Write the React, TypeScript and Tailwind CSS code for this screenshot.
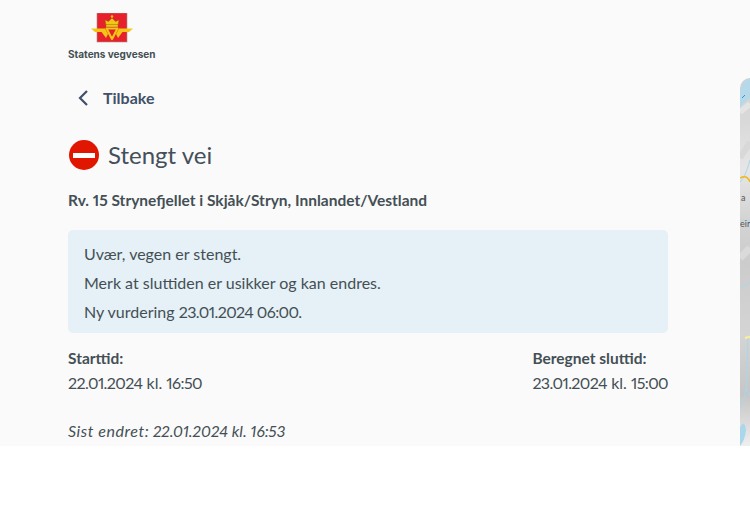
// Road closure detail page with a sliver of map on the right
function Logo() {
  return (
    <svg width="88" height="34" viewBox="0 0 88 34" className="block" aria-hidden="true">
      <rect x="29" y="0" width="30" height="29" fill="#e8202c" stroke="#9a8f88" strokeWidth="0.6" />
      {/* crown */}
      <path d="M38 12 L37 7 L40.500 8.500 L44 5 L47.500 8.500 L51 7 L50 12 Z" fill="#f3c516" stroke="#8a6a10" strokeWidth="0.5" />
      <rect x="38" y="11.500" width="12" height="2.500" fill="#f3c516" stroke="#8a6a10" strokeWidth="0.4" />
      <circle cx="44" cy="3.500" r="1.200" fill="#f3c516" />
      {/* wings */}
      <path d="M23 15.500 L37 15.500 L40 21 L38 25 L33.500 19 L27 19 Z" fill="#f3c516" />
      <path d="M65 15.500 L51 15.500 L48 21 L50 25 L54.500 19 L61 19 Z" fill="#f3c516" />
      {/* wheel triangle */}
      <path d="M38.500 15.500 L49.500 15.500 L44 26 Z" fill="#e8202c" stroke="#f3c516" strokeWidth="2.200" strokeLinejoin="round" />
    </svg>
  );
}

function MapStrip() {
  return (
    <svg viewBox="0 0 10 368" preserveAspectRatio="none" className="w-full h-full block" aria-hidden="true">
      <defs>
        <linearGradient id="relief" x1="0" y1="0" x2="0" y2="1">
          <stop offset="0" stopColor="#d2d2d2" />
          <stop offset="0.12" stopColor="#d9d9d9" />
          <stop offset="0.25" stopColor="#e6e6e6" />
          <stop offset="0.38" stopColor="#d4d4d4" />
          <stop offset="0.5" stopColor="#cccccc" />
          <stop offset="0.7" stopColor="#d4d4d4" />
          <stop offset="0.86" stopColor="#c6c6c6" />
          <stop offset="0.94" stopColor="#dcdcdc" />
          <stop offset="1" stopColor="#efefef" />
        </linearGradient>
      </defs>
      <rect width="10" height="368" fill="url(#relief)" />
      <path d="M0 30 L0 14 Q2 2 10 0 L10 20 Q4 24 0 30 Z" fill="#b5d9e9" />
      <path d="M2 20 L5 17" stroke="#3a8fe0" strokeWidth="1" fill="none" />
      <path d="M0 34 L10 26" stroke="#e4e4e4" strokeWidth="6" fill="none" />
      <path d="M0 80 L10 64" stroke="#d8d8d8" strokeWidth="6" fill="none" />
      <path d="M0 104 Q5 100 10 82" stroke="#a9d7ec" strokeWidth="1" fill="none" />
      <path d="M0 100 Q7 96 10 104" stroke="#f2b90f" strokeWidth="1.500" fill="none" />
      <path d="M0 142 L10 143" stroke="#a9d7ec" strokeWidth="1" fill="none" />
      <path d="M0 180 L10 170" stroke="#dadada" strokeWidth="7" fill="none" />
      <path d="M0 210 Q5 206 10 205" stroke="#a9d7ec" strokeWidth="1" fill="none" />
      <path d="M5 260 L10 259" stroke="#f5ef9a" strokeWidth="2.500" fill="none" />
      <path d="M8 260 L6 310 Q5 322 0 330" stroke="#a9d7ec" strokeWidth="1" fill="none" />
      <path d="M6 310 L10 318" stroke="#a9d7ec" strokeWidth="1" fill="none" />
      <path d="M0 368 L0 350 Q4 340 6 352 Q5 362 0 368 Z" fill="#a9d7ec" />
    </svg>
  );
}

// Lato's digits run wider than the reference face, so number runs get pulled in
function Num({ children }: { children: React.ReactNode }) {
  return <span className="tracking-[-0.6px]">{children}</span>;
}

export default function App() {
  return (
    <div className="h-[530px] bg-white font-['Lato',sans-serif] text-[16px] text-[#444f55] [font-variant-numeric:proportional-nums]">
      <div className="h-[446px] bg-[#fafafa] flex overflow-hidden">
        <main className="w-[740px] shrink-0 pl-[68px] pr-[72px]">
          <div className="pt-[13px] h-[64px]">
            <Logo />
            <p className="w-[88px] text-[10px] leading-[14px] font-bold whitespace-nowrap font-['Inter',sans-serif]">
              Statens vegvesen
            </p>
          </div>

          <div className="mt-[24px] flex items-center h-[20px] pl-[8px] gap-[13px] text-[#3f5068]">
            <svg width="14" height="18" viewBox="0 0 14 18" fill="none" stroke="#3f5068" strokeWidth="2.200" aria-hidden="true">
              <path d="M11 2 L4 9 L11 16" />
            </svg>
            <span className="font-bold text-[16px]">Tilbake</span>
          </div>

          <div className="mt-[31px] flex items-center gap-[9px] h-[32px] pl-[1px]">
            <span className="w-[30px] h-[30px] rounded-full bg-[#e01600] flex items-center justify-center shrink-0">
              <span className="w-[22px] h-[5px] bg-white" />
            </span>
            <h1 className="text-[24px] leading-[32px] text-[#444f5a]">Stengt vei</h1>
          </div>

          <p className="mt-[17px] leading-[24px] font-bold text-[15.500px]">
            Rv. 15 Strynefjellet i Skjåk/Stryn, Innlandet/Vestland
          </p>

          <div className="mt-[18px] h-[103px] rounded-[5px] bg-[#e5f1f6] px-[16px] pt-[9px] leading-[29px]">
            <p>Uvær, vegen er stengt.</p>
            <p>Merk at sluttiden er usikker og kan endres.</p>
            <p>Ny vurdering <Num>23.01.2024 06:00.</Num></p>
          </div>

          <div className="mt-[13px] flex justify-between leading-[24px]">
            <div>
              <p className="font-bold text-[15.500px] mb-px">Starttid:</p>
              <p><Num>22.01.2024</Num> kl. <Num>16:50</Num></p>
            </div>
            <div>
              <p className="font-bold text-[15.500px] mb-px">Beregnet sluttid:</p>
              <p><Num>23.01.2024</Num> kl. <Num>15:00</Num></p>
            </div>
          </div>

          <p className="mt-[24px] italic leading-[24px]">
            <span className="tracking-[0.55px]">Sist endret:</span> 22.01.2024 kl. 16:53
          </p>
        </main>

        <div className="relative flex-1 mt-[78px] rounded-tl-[12px] overflow-hidden">
          <MapStrip />
          <span className="absolute left-[1px] top-[114px] text-[9px] leading-[12px] text-[#555]">a</span>
          <span className="absolute left-0 top-[140px] text-[9px] leading-[12px] text-[#555] whitespace-nowrap">eir</span>
        </div>
      </div>
    </div>
  );
}
